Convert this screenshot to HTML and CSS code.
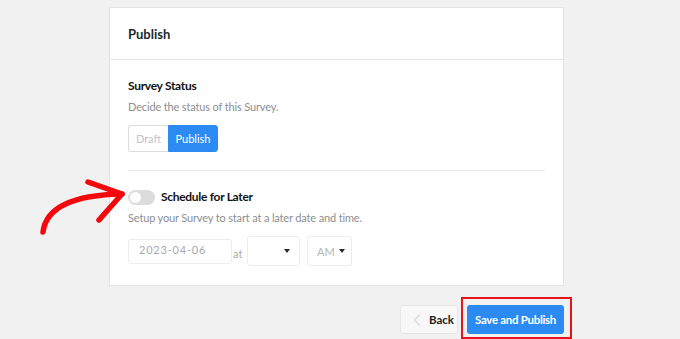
FILE: index.html
```html
<!DOCTYPE html>
<html>
<head>
<meta charset="utf-8">
<link rel="stylesheet" href="styles.css">
</head>
<body>
<div class="page">
  <div class="card">
    <div class="card-head"><h2 class="card-title">Publish</h2></div>
    <div class="card-body">
      <h3 class="label">Survey Status</h3>
      <p class="desc">Decide the status of this Survey.</p>
      <div class="seg">
        <span class="seg-btn">Draft</span>
        <span class="seg-btn active">Publish</span>
      </div>
      <hr class="divider">
      <div class="toggle-row">
        <span class="toggle"><span class="knob"></span></span>
        <span class="label">Schedule for Later</span>
      </div>
      <p class="desc">Setup your Survey to start at a later date and time.</p>
      <div class="date-row">
        <span class="date-input">2023-04-06</span>
        <span class="at">at</span>
        <span class="select sel-hour"><span class="caret"></span></span>
        <span class="select sel-ampm">AM<span class="caret"></span></span>
      </div>
    </div>
  </div>
  <div class="footer">
    <span class="btn-back">
      <svg class="chev" width="8" height="12" viewBox="0 0 8 12"><path d="M6.5 1 L1.5 6 L6.5 11" fill="none" stroke="#dcdcdc" stroke-width="1.6" stroke-linecap="round" stroke-linejoin="round"/></svg>
      Back
    </span>
    <span class="btn-save">Save and Publish<span class="highlight"></span></span>
  </div>
  <svg class="arrow" width="140" height="80" viewBox="0 0 140 80">
    <path d="M13 62 C 16 38, 42 25, 92 24" fill="none" stroke="#f5080c" stroke-width="5.5" stroke-linecap="round"/>
    <path d="M58 12 L92 24 L69 50" fill="none" stroke="#f5080c" stroke-width="5.5" stroke-linecap="round" stroke-linejoin="round"/>
  </svg>
</div>
</body>
</html>
```
FILE: styles.css
```css
* { box-sizing: border-box; }
html, body { margin: 0; padding: 0; }
body {
  background: #f1f1f1;
  font-family: "Lato", "Noto Sans", sans-serif;
  color: #1d2327;
  width: 680px;
  height: 339px;
  overflow: hidden;
}
.page {
  position: relative;
  padding-top: 7px;
  padding-left: 109px;
  width: 680px;
  height: 339px;
}
.card {
  width: 455px;
  background: #fff;
  border: 1px solid #e4e4e4;
}
.card-head {
  height: 52px;
  display: flex;
  align-items: center;
  padding: 0 18px;
  border-bottom: 1px solid #e4e4e4;
}
.card-title {
  margin: 0;
  font-size: 13px;
  font-weight: 700;
  color: #23282d;
}
.card-body {
  padding: 18px 18px 19px;
}
.label {
  margin: 0;
  font-size: 12px;
  font-weight: 700;
  line-height: 16px;
  letter-spacing: -0.3px;
  color: #111;
}
.desc {
  margin: 5px 0 0;
  font-size: 11px;
  line-height: 16px;
  letter-spacing: -0.15px;
  color: #8c8f94;
}
.seg {
  display: flex;
  margin-top: 10px;
}
.seg-btn {
  height: 27px;
  display: flex;
  align-items: center;
  padding: 0 10px;
  font-size: 11px;
  border: 1px solid #dcdcde;
  color: #c3c4c7;
}
.seg-btn:first-child {
  border-radius: 3px 0 0 3px;
  border-right: none;
  width: 40px;
  justify-content: center;
}
.seg-btn.active {
  background: #2c8af3;
  border-color: #2c8af3;
  color: #fff;
  border-radius: 0 3px 3px 0;
  width: 50px;
  justify-content: center;
}
.divider {
  border: none;
  border-top: 1px solid #e7e7e7;
  margin: 18px 0 0;
}
.toggle-row {
  display: flex;
  align-items: center;
  gap: 6px;
  margin-top: 18px;
  height: 16px;
}
.toggle {
  width: 27px;
  height: 15px;
  border-radius: 8px;
  background: #dcdcdc;
  display: flex;
  align-items: center;
  padding-left: 2px;
}
.knob {
  width: 11px;
  height: 11px;
  border-radius: 50%;
  background: #fff;
}
.date-row {
  display: flex;
  align-items: center;
  margin-top: 10px;
  height: 30px;
}
.date-input {
  width: 104px;
  height: 25px;
  border: 1px solid #ececec;
  border-radius: 3px;
  display: flex;
  align-items: center;
  padding: 0 0 3px 10px;
  font-size: 11px;
  letter-spacing: 0.8px;
  color: #a7aaad;
}
.at {
  font-size: 11px;
  color: #a7aaad;
  margin-left: 1px;
  margin-top: 4px;
  width: 14px;
}
.select {
  height: 30px;
  border: 1px solid #ececec;
  border-radius: 3px;
  display: flex;
  align-items: center;
  font-size: 11px;
  color: #b5b7ba;
}
.sel-hour {
  width: 53px;
  justify-content: flex-end;
  padding-right: 9px;
}
.sel-ampm {
  width: 45px;
  margin-left: 7px;
  padding-left: 9px;
}
.caret {
  width: 0;
  height: 0;
  border-left: 3.5px solid transparent;
  border-right: 3.5px solid transparent;
  border-top: 4px solid #2a2a2a;
}
.sel-ampm .caret { margin-left: 4px; }
.footer {
  width: 455px;
  display: flex;
  justify-content: flex-end;
  gap: 9px;
  margin-top: 19px;
}
.btn-back {
  width: 58px;
  height: 29px;
  background: #f8f8f8;
  border: 1px solid #e6e6e6;
  border-radius: 3px;
  display: flex;
  align-items: center;
  padding-left: 12px;
  gap: 8px;
  font-size: 11.5px;
  font-weight: 700;
  color: #222;
}
.btn-save {
  position: relative;
  width: 97px;
  height: 29px;
  background: #2c8af3;
  border-radius: 3px;
  display: flex;
  align-items: center;
  justify-content: center;
  font-size: 11.5px;
  font-weight: 700;
  letter-spacing: -0.3px;
  color: #fff;
}
.highlight {
  position: absolute;
  top: -8px;
  left: -6px;
  right: -8px;
  bottom: -5px;
  border: 2px solid #e8141c;
}
.arrow {
  position: absolute;
  left: 30px;
  top: 170px;
}
```
